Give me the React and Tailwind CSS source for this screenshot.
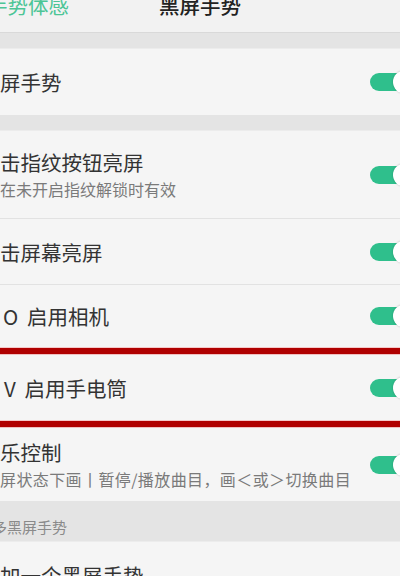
import React from "react";

const font = { fontFamily: '"Noto Sans CJK SC", "Noto Sans", sans-serif' };

function Switch() {
  return (
    <div className="relative w-[46px] h-[18px] -mr-[16px] shrink-0">
      <div className="absolute inset-0 rounded-full bg-[#2fbf8c]" />
      <div className="absolute right-0 top-1/2 -translate-y-1/2 w-[23px] h-[23px] rounded-full bg-white shadow-[0_0_2px_rgba(0,0,0,0.25)]" />
    </div>
  );
}

function Row({ h, title, sub, border, pl = "pl-0", subTrack = "" }) {
  return (
    <div className={`flex items-center justify-between bg-[#f5f5f5] ${h} ${border ? "border-b border-[#e2e2e2]" : ""}`}>
      <div className={`flex flex-col ${pl} whitespace-nowrap`}>
        <div className="text-[20.5px] leading-[20px] text-[#333333]">{title}</div>
        {sub && <div className={`mt-[9px] text-[16px] leading-[16px] text-[#7a7a7a] ${subTrack}`}>{sub}</div>}
      </div>
      <Switch />
    </div>
  );
}

function RedLine() {
  return (
    <div className="h-[8px] flex flex-col bg-[#f3dcdc]">
      <div className="h-[1px] bg-[#f5c8c8]" />
      <div className="h-[6px] bg-[#b00000]" />
      <div className="h-[1px] bg-[#f0c0c0]" />
    </div>
  );
}

export default function App() {
  return (
    <div className="w-[400px] h-[576px] overflow-hidden bg-[#e4e4e4]" style={font}>
      {/* header */}
      <div className="h-[33px] bg-[#f2f2f2] border-b border-[#d9d9d9] relative flex items-start">
        <div className="-mt-[5px] -ml-[13px] text-[20.5px] leading-[20px] text-[#4cc596] whitespace-nowrap">手势体感</div>
        <div className="absolute left-0 right-0 -top-[5px] text-center text-[20.5px] leading-[20px] font-medium text-[#222222]">黑屏手势</div>
      </div>
      <div className="h-[16px] bg-[#e4e4e4] border-b border-[#ececec]" />
      <Row h="h-[66px]" title="屏手势" />
      <div className="h-[16px] bg-[#e4e4e4] border-b border-[#ececec]" />
      <Row h="h-[88px]" title="击指纹按钮亮屏" sub="在未开启指纹解锁时有效" border />
      <Row h="h-[66px]" title="击屏幕亮屏" border />
      <Row h="h-[62px]" title={"O\u00a0\u2009启用相机"} pl="pl-[3px]" />
      <RedLine />
      <Row h="h-[65px]" title={"V\u00a0\u2009启用手电筒"} pl="pl-[4px]" />
      <RedLine />
      <Row h="h-[73px]" title="乐控制" sub="屏状态下画丨暂停/播放曲目，画＜或＞切换曲目" subTrack="tracking-[0.4px]" />
      <div className="h-[41px] bg-[#e4e4e4] pt-[18px] border-b border-[#ececec]">
        <div className="-ml-[8px] text-[15px] leading-[15px] text-[#8a8a8a] whitespace-nowrap">多黑屏手势</div>
      </div>
      <div className="h-[66px] bg-[#f5f5f5] flex items-center">
        <div className="text-[20.5px] leading-[20px] text-[#333333] whitespace-nowrap">加一个黑屏手势</div>
      </div>
    </div>
  );
}
